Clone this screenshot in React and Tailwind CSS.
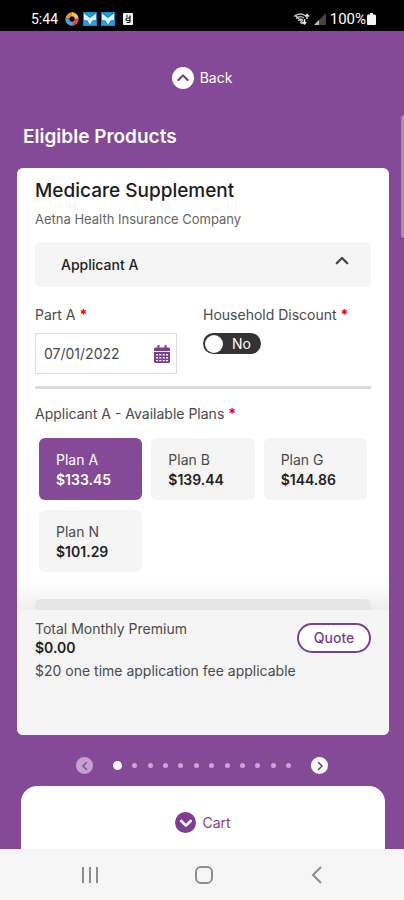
import { useState } from "react";

const plans = [
  { name: "Plan A", price: "$133.45" },
  { name: "Plan B", price: "$139.44" },
  { name: "Plan G", price: "$144.86" },
  { name: "Plan N", price: "$101.29" },
];

const pages = [1, 2, 3, 4, 5, 6, 7, 8, 9, 10, 11, 12];

function Chevron({ className, d, width = 2 }) {
  return (
    <svg viewBox="0 0 24 24" className={className} fill="none" stroke="currentColor" strokeWidth={width} strokeLinecap="round" strokeLinejoin="round" aria-hidden="true">
      <path d={d} />
    </svg>
  );
}

function Required() {
  return <span className="font-bold text-red-600" aria-hidden="true">*</span>;
}

function MailIcon() {
  return (
    <svg viewBox="0 0 14 14" className="size-3.5" aria-hidden="true">
      <rect width="14" height="14" fill="#1587c9" />
      <path d="M1 1.500 7 6l6-4.500V8L9.500 8.500 7 13 4.500 8.500 1 8Z" fill="#d9f1fd" />
      <path d="M3 1h8L7 4.500Z" fill="#2a9fdb" />
      <path d="M1 9l3 .5L6 13H1ZM13 9l-3 .5L8 13h5Z" fill="#2a9fdb" />
    </svg>
  );
}

function StatusBar() {
  return (
    <div className="flex h-[31px] items-end justify-between bg-black pr-7 pb-1 pl-[31px] text-white">
      <div className="flex items-center gap-1">
        <span className="w-[30px] font-[Roboto,sans-serif] text-sm leading-4">5:44</span>
        <svg viewBox="0 0 14 14" className="size-3.5" fill="none" strokeWidth="4" aria-hidden="true">
          <path d="M2.500 6.500A4.700 4.700 0 0 1 8 2.400" stroke="#f28c28" />
          <path d="M7 2.300A4.700 4.700 0 0 1 11.700 7" stroke="#f6c544" />
          <path d="M11.700 6.500A4.700 4.700 0 0 1 6.500 11.600" stroke="#e8424f" />
          <path d="M7.500 11.700A4.700 4.700 0 0 1 2.300 6.500" stroke="#3fa9dc" />
        </svg>
        <MailIcon />
        <MailIcon />
        <svg viewBox="0 0 10 12" className="ml-1 h-3 w-2.5" aria-hidden="true">
          <rect width="10" height="12" rx="1" fill="#f4f4f4" />
          <path d="M7 2.500v6a1 1 0 0 1-1 1H3.500M6.500 5H4.300a1.200 1.200 0 0 0 0 2.500H6.500M3 3h2" fill="none" stroke="#111" strokeWidth="1.200" />
        </svg>
      </div>
      <div className="flex items-center gap-1">
        <svg viewBox="0 0 17 12" className="h-3 w-[17px]" fill="none" stroke="#c9c9c9" strokeWidth="1.300" aria-hidden="true">
          <path d="M1 3.500Q7-1 12 2.500M3 5.500Q7 2 11 5M5 7.500Q8 5 10 7.500M2 2l8 8M7 9.500l3 1.500" />
          <path d="M14 6V1.500M12 3.500l2-2 2 2M11.500 6v4.500M9.800 9l1.700 2 1.700-2" stroke="#eee" />
        </svg>
        <svg viewBox="0 0 12 12" className="h-3 w-3" aria-hidden="true">
          <path d="M0 12 12 0v12Z" fill="#444" />
          <path d="M0 12 5 7v5Z" fill="#bbb" />
        </svg>
        <span className="flex items-center gap-px">
          <span className="font-[Roboto,sans-serif] text-[15px] leading-4">100%</span>
          <svg viewBox="0 0 9 12" className="h-3 w-[9px]" aria-hidden="true">
            <path d="M3 0h3v1.500h1.500A1.500 1.500 0 0 1 9 3v8a1 1 0 0 1-1 1H1a1 1 0 0 1-1-1V3a1.500 1.500 0 0 1 1.500-1.500H3Z" fill="#f5f5f5" />
          </svg>
        </span>
      </div>
    </div>
  );
}

function CalendarIcon() {
  return (
    <svg viewBox="0 0 16 18" className="h-[18px] w-4" aria-hidden="true">
      <path d="M1.500 2.500h13A1.500 1.500 0 0 1 16 4v2H0V4a1.500 1.500 0 0 1 1.500-1.500ZM3.500 0h2v4h-2ZM10.500 0h2v4h-2ZM0 7h16v9.500a1.500 1.500 0 0 1-1.500 1.500h-13A1.500 1.500 0 0 1 0 16.500Z" fill="#7c3f91" />
      <path d="M2 9h2v1.500H2Zm3.300 0h2v1.500h-2Zm3.400 0h2v1.500h-2ZM12 9h2v1.500h-2ZM2 12h2v1.500H2Zm3.300 0h2v1.500h-2Zm3.400 0h2v1.500h-2ZM12 12h2v1.500h-2ZM2 15h2v1.200H2Zm3.300 0h2v1.200h-2Zm3.400 0h2v1.200h-2ZM12 15h2v1.200h-2Z" fill="#fff" />
    </svg>
  );
}

export default function App() {
  const [plan, setPlan] = useState("Plan A");
  const [date, setDate] = useState("07/01/2022");

  return (
    <div className="relative flex min-h-screen flex-col bg-[#844a97] font-[Inter,sans-serif] text-sm text-[#4a4a4a]">
      <StatusBar />

      <button type="button" className="mt-9 flex h-[22px] items-center gap-1.5 self-center text-white">
        <span className="flex size-[22px] items-center justify-center rounded-full bg-white text-[#6d3c80]">
          <Chevron className="size-4" d="m5 15 7-7 7 7" width={3} />
        </span>
        Back
      </button>

      <h1 className="mt-9 px-[23px] text-[19px] leading-6 font-semibold text-white">Eligible Products</h1>

      <main className="mt-[19px] mr-[15px] ml-[17px] flex flex-1 flex-col overflow-hidden rounded-md bg-white">
        <div className="px-[18px] pt-[11px]">
          <h2 className="text-[19px] leading-6 font-medium text-[#1c1c1c]">Medicare Supplement</h2>
          <p className="mt-1.5 text-[13px] leading-5 text-[#666]">Aetna Health Insurance Company</p>

          <button type="button" aria-expanded="true" className="mt-[13px] flex h-[45px] w-full items-center justify-between rounded-md bg-[#f5f5f5] pr-5 pl-[26px] font-medium text-[#222]">
            Applicant A
            <Chevron className="mb-2 size-[18px] text-[#444]" d="m5 15 7-7 7 7" width={3} />
          </button>

          <div className="mt-[18px] grid grid-cols-2">
            <div>
              <label htmlFor="part-a" className="block leading-5">Part A <Required /></label>
              <div className="mt-2 flex h-[41px] w-[142px] items-center border border-[#ddd] pr-1.5 pl-1">
                <input id="part-a" value={date} onChange={(e) => setDate(e.target.value)} className="w-0 flex-1 bg-transparent pl-1 outline-none" />
                <button type="button" aria-label="Choose date">
                  <CalendarIcon />
                </button>
              </div>
            </div>
            <div>
              <label htmlFor="household" className="block leading-5 whitespace-nowrap">Household Discount <Required /></label>
              <label className="mt-2 flex h-[21px] w-[58px] items-center justify-between rounded-full bg-[#333] pr-2.5 pl-0.5 text-white">
                <input id="household" type="checkbox" role="switch" className="size-[18px] appearance-none rounded-full bg-white" />
                <span>No</span>
              </label>
            </div>
          </div>

          <hr className="mt-3 border-t-[3px] border-[#dcdcdc]" />

          <fieldset>
            <legend className="pt-[15px] leading-5">Applicant A - Available Plans <Required /></legend>
            <div className="mt-3.5 grid grid-cols-3 gap-x-[9px] gap-y-2.5 px-1">
              {plans.map((p) => (
                <label
                  key={p.name}
                  className={
                    plan === p.name
                      ? "block rounded-md bg-[#844a97] px-[17px] pt-3 pb-2.5 leading-5 text-white"
                      : "block rounded-md bg-[#f5f5f5] px-[17px] pt-3 pb-2.5 leading-5"
                  }
                >
                  <input type="radio" name="plan" className="sr-only" checked={plan === p.name} onChange={() => setPlan(p.name)} />
                  <span className="block">{p.name}</span>
                  <span className={plan === p.name ? "block font-semibold" : "block font-semibold text-[#222]"}>{p.price}</span>
                </label>
              ))}
            </div>
          </fieldset>
        </div>

        <div className="mt-auto bg-linear-to-b from-white to-[#eeeeee] px-[18px] pt-[18px]">
          <div className="h-[11px] rounded-t-md bg-[#e6e6e6]" />
        </div>
        <footer className="h-[125px] bg-[#f5f5f5] px-[18px] pt-[9px]">
          <div className="flex items-start justify-between">
            <div>
              <p className="leading-5">Total Monthly Premium</p>
              <p className="leading-[18px] font-semibold text-[#222]">$0.00</p>
            </div>
            <button type="button" className="mt-1 h-[30px] w-[74px] rounded-full border-2 border-[#7c3f91] bg-white font-medium text-[#7c3f91]">Quote</button>
          </div>
          <p className="mt-1 leading-5">$20 one time application fee applicable</p>
        </footer>
      </main>

      <nav aria-label="Products" className="mt-[22px] flex h-[17px] items-center justify-center">
        <button type="button" aria-label="Previous" disabled className="flex size-[17px] items-center justify-center rounded-full bg-[#c4a2cf] text-[#844a97]">
          <Chevron className="size-3" d="m15 5-7 7 7 7" width={3} />
        </button>
        <div className="mx-5 flex w-[178px] items-center justify-between">
          {pages.map((n) => (
            <button
              key={n}
              type="button"
              aria-label={`Page ${n}`}
              className={n === 1 ? "size-[9px] rounded-full bg-white" : "size-[5px] rounded-full bg-[#cda3d8]"}
            />
          ))}
        </div>
        <button type="button" aria-label="Next" className="flex size-[17px] items-center justify-center rounded-full bg-white text-[#6d3c80]">
          <Chevron className="size-3" d="m9 5 7 7-7 7" width={3} />
        </button>
      </nav>

      <button type="button" className="mt-3 mr-[19px] ml-[21px] flex h-[63px] items-center justify-center gap-1.5 rounded-t-2xl bg-white pt-2.5 text-[#7c3f91]">
        <span className="flex size-[21px] items-center justify-center rounded-full bg-[#7c3f91] text-white">
          <Chevron className="size-4" d="m5 9 7 7 7-7" width={4} />
        </span>
        Cart
      </button>

      <div className="flex h-[51px] items-center justify-between bg-[#f6f6f6] pr-[78px] pl-[81px] text-[#8d8d8d]">
        <button type="button" aria-label="Recent apps">
          <svg viewBox="0 0 18 18" className="size-[18px]" fill="none" stroke="currentColor" strokeWidth="2" aria-hidden="true">
            <path d="M2 1v16M9 1v16M16 1v16" />
          </svg>
        </button>
        <button type="button" aria-label="Home">
          <svg viewBox="0 0 18 18" className="size-[18px]" fill="none" stroke="currentColor" strokeWidth="2" aria-hidden="true">
            <rect x="1" y="1" width="16" height="16" rx="5" />
          </svg>
        </button>
        <button type="button" aria-label="Back">
          <svg viewBox="0 0 18 18" className="size-[18px]" fill="none" stroke="currentColor" strokeWidth="2" aria-hidden="true">
            <path d="M13 1 5 9l8 8" />
          </svg>
        </button>
      </div>

      <div className="absolute top-[115px] right-0 h-[123px] w-[3px] rounded-l-full bg-[#a98bb5]" />
    </div>
  );
}
